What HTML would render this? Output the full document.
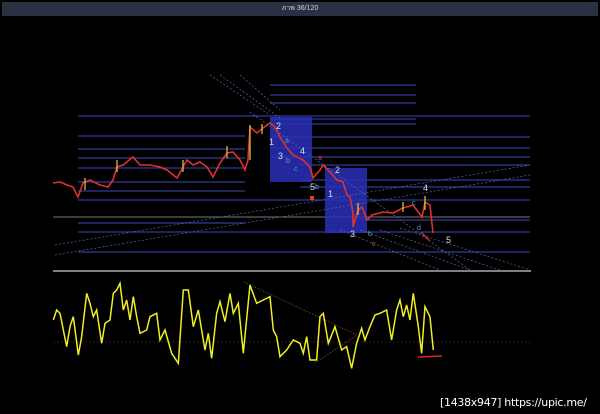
<!DOCTYPE html>
<html><head><meta charset="utf-8"><style>
html,body{margin:0;padding:0;background:#000;width:600px;height:414px;overflow:hidden}
.bar{position:absolute;left:2px;top:2px;width:596px;height:14px;background:#2a3142;color:#cfd3dc;font:7px "Liberation Sans","Noto Sans CJK SC",sans-serif;text-align:center;line-height:14px}
.wm{position:absolute;left:440px;top:396px;color:#fff;font:11px "DejaVu Sans",sans-serif;white-space:nowrap;letter-spacing:-0.3px}
svg{position:absolute;left:0;top:0}
</style></head><body>
<div class="bar">ภาพ 36/120</div>
<svg width="600" height="414" viewBox="0 0 600 414">
<g stroke="#3b48c0" stroke-width="1">
<line x1="78" y1="116" x2="530" y2="116"/>
<line x1="78" y1="136" x2="245" y2="136"/>
<line x1="78" y1="149" x2="245" y2="149"/>
<line x1="78" y1="158" x2="245" y2="158"/>
<line x1="78" y1="168" x2="245" y2="168"/>
<line x1="78" y1="182" x2="245" y2="182"/>
<line x1="78" y1="191" x2="245" y2="191"/>
<line x1="78" y1="200" x2="530" y2="200"/>
<line x1="78" y1="223" x2="245" y2="223"/>
<line x1="78" y1="232" x2="530" y2="232"/>
<line x1="78" y1="252" x2="530" y2="252"/>
<line x1="270" y1="85" x2="416" y2="85"/>
<line x1="270" y1="95" x2="416" y2="95"/>
<line x1="270" y1="103" x2="416" y2="103"/>
<line x1="270" y1="119" x2="416" y2="119"/>
<line x1="270" y1="124" x2="416" y2="124"/>
<line x1="270" y1="137" x2="530" y2="137"/>
<line x1="270" y1="148" x2="530" y2="148"/>
<line x1="270" y1="157" x2="530" y2="157"/>
<line x1="300" y1="165" x2="530" y2="165"/>
<line x1="300" y1="180" x2="530" y2="180"/>
<line x1="300" y1="187" x2="530" y2="187"/>
<line x1="360" y1="220" x2="530" y2="220"/>
</g>
<line x1="53" y1="217" x2="530" y2="217" stroke="#777" stroke-width="1"/>
<rect x="270" y="117" width="42" height="65" fill="#2a2fb8" opacity="0.85"/>
<rect x="325" y="168" width="42" height="65" fill="#2a2fb8" opacity="0.85"/>
<g stroke="#5566aa" stroke-width="0.7" stroke-dasharray="2,2" fill="none">
<line x1="210" y1="75" x2="270" y2="115"/><line x1="220" y1="75" x2="280" y2="118"/>
<line x1="240" y1="75" x2="280" y2="110"/>
<line x1="55" y1="255" x2="530" y2="175"/><line x1="55" y1="245" x2="530" y2="165"/>
<line x1="340" y1="230" x2="440" y2="270"/><line x1="360" y1="230" x2="470" y2="270"/>
<line x1="380" y1="230" x2="500" y2="270"/><line x1="400" y1="228" x2="530" y2="270"/>
<line x1="250" y1="112" x2="470" y2="270"/>
</g>
<polyline fill="none" stroke="#e03030" stroke-width="1.6" points="53,183 60,182 67,185 73,187 78,197 83,183 90,180 100,185 108,187 113,180 117,167 123,165 133,157 140,165 150,165 160,167 167,170 177,178 183,167 187,160 193,165 200,162 207,167 213,177 220,163 227,153 233,152 240,160 245,170 248,160 250,127 257,133 263,128 270,123 275,127 280,137 287,148 293,155 303,160 310,167 313,178 320,170 323,165 330,172 337,180 343,182 347,195 350,197 353,213 353,227 358,210 362,207 367,220 372,215 383,212 393,213 403,208 413,205 422,217 425,202 430,205 433,233"/>
<g stroke="#e8d030" stroke-width="1.2">
<line x1="85" y1="178" x2="85" y2="190"/><line x1="117" y1="160" x2="117" y2="172"/><line x1="183" y1="160" x2="183" y2="172"/><line x1="227" y1="146" x2="227" y2="158"/><line x1="250" y1="125" x2="250" y2="160"/><line x1="262" y1="124" x2="262" y2="134"/><line x1="358" y1="203" x2="358" y2="215"/><line x1="403" y1="202" x2="403" y2="212"/><line x1="425" y1="196" x2="425" y2="210"/>
</g>
<line x1="421" y1="232" x2="430" y2="241" stroke="#e02020" stroke-width="1.5"/>
<g font-family="Liberation Sans,sans-serif" font-size="9" fill="#ddd">
<text x="276" y="129">2</text><text x="269" y="145">1</text><text x="278" y="159">3</text><text x="300" y="154">4</text><text x="310" y="190">5</text><text x="328" y="197">1</text><text x="335" y="173">2</text><text x="350" y="237">3</text><text x="423" y="191">4</text><text x="446" y="243">5</text>
</g>
<g font-family="Liberation Sans,sans-serif" font-size="7" fill="#4aa0d0">
<text x="285" y="143">a</text><text x="286" y="163">b</text><text x="294" y="171">c</text><text x="315" y="189">b</text><text x="368" y="236">b</text><text x="417" y="230">d</text><text x="412" y="205">c</text>
</g>
<g font-family="Liberation Sans,sans-serif" font-size="7" fill="#e04020">
<text x="318" y="160">a</text><text x="372" y="246">c</text><rect x="310" y="196" width="4" height="4" fill="#e04020"/>
</g>
<line x1="53" y1="271" x2="531" y2="271" stroke="#aaa" stroke-width="1.5"/>
<line x1="53" y1="342" x2="531" y2="342" stroke="#502020" stroke-width="0.7" stroke-dasharray="2,2"/>
<polyline fill="none" stroke="#705020" stroke-width="0.8" stroke-dasharray="1.5,1.5" points="244,282 357,335 315,363"/>
<g transform="translate(40,260) scale(0.3333)">
<polyline fill="none" stroke="#f0f020" stroke-width="1.5" vector-effect="non-scaling-stroke" points="40,180 50,150 60,160 70,210 80,260 90,200 100,170 115,285 125,230 140,100 150,130 160,170 170,150 185,250 195,190 210,180 220,100 230,90 240,70 250,150 260,120 270,180 280,110 290,170 300,220 320,210 330,170 350,160 360,240 375,210 395,280 415,310 430,90 445,90 460,200 475,150 495,270 505,220 515,295 530,160 540,125 555,185 570,100 580,160 595,130 610,280 630,75 650,130 670,120 690,110 700,210 710,230 720,290 740,270 760,240 780,250 790,280 800,230 810,300 830,300 840,170 850,160 865,250 885,200 905,270 920,260 935,325 950,250 965,205 975,240 990,200 1005,165 1020,160 1040,150 1055,240 1070,150 1080,120 1090,170 1100,135 1110,180 1120,100 1135,200 1145,280 1155,140 1170,170 1180,270"/>
</g>
<line x1="418" y1="357" x2="442" y2="356" stroke="#e02020" stroke-width="1.5"/>
</svg>
<div class="wm">[1438x947] https://upic.me/</div>
</body></html>
